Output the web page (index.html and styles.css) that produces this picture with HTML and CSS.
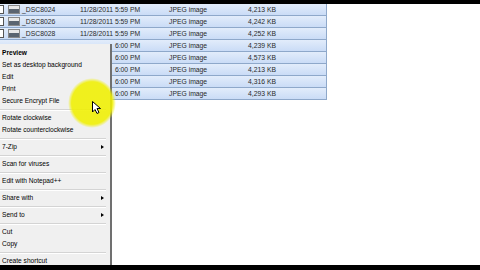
FILE: index.html
```html
<!DOCTYPE html>
<html>
<head>
<meta charset="utf-8">
<link rel="stylesheet" href="styles.css">
</head>
<body>
<div class="screen">
  <div class="bar"></div>
  <div class="main">
    <div class="files">
      <div class="row"><span class="ico"><i class="chk"></i><i class="pic"></i></span><span class="name">_DSC8024</span><span class="date">11/28/2011 5:59 PM</span><span class="type">JPEG image</span><span class="size">4,213 KB</span></div>
      <div class="row"><span class="ico"><i class="chk"></i><i class="pic"></i></span><span class="name">_DSC8026</span><span class="date">11/28/2011 5:59 PM</span><span class="type">JPEG image</span><span class="size">4,242 KB</span></div>
      <div class="row"><span class="ico"><i class="chk"></i><i class="pic"></i></span><span class="name">_DSC8028</span><span class="date">11/28/2011 5:59 PM</span><span class="type">JPEG image</span><span class="size">4,252 KB</span></div>
      <!-- rows under the menu: only the right part shows -->
      <div class="row"><span class="ico"></span><span class="name"></span><span class="date"><span class="hid">11/28/2011 </span>6:00 PM</span><span class="type">JPEG image</span><span class="size">4,239 KB</span></div>
      <div class="row"><span class="ico"></span><span class="name"></span><span class="date"><span class="hid">11/28/2011 </span>6:00 PM</span><span class="type">JPEG image</span><span class="size">4,573 KB</span></div>
      <div class="row"><span class="ico"></span><span class="name"></span><span class="date"><span class="hid">11/28/2011 </span>6:00 PM</span><span class="type">JPEG image</span><span class="size">4,213 KB</span></div>
      <div class="row"><span class="ico"></span><span class="name"></span><span class="date"><span class="hid">11/28/2011 </span>6:00 PM</span><span class="type">JPEG image</span><span class="size">4,316 KB</span></div>
      <div class="row"><span class="ico"></span><span class="name"></span><span class="date"><span class="hid">11/28/2011 </span>6:00 PM</span><span class="type">JPEG image</span><span class="size">4,293 KB</span></div>
    </div>
  </div>
  <div class="bar bottom"></div>

  <div class="menu">
    <div class="item bold">Preview</div>
    <div class="item">Set as desktop background</div>
    <div class="item">Edit</div>
    <div class="item">Print</div>
    <div class="item">Secure Encrypt File</div>
    <div class="sep"></div>
    <div class="item">Rotate clockwise</div>
    <div class="item">Rotate counterclockwise</div>
    <div class="sep"></div>
    <div class="item sub">7-Zip</div>
    <div class="sep"></div>
    <div class="item">Scan for viruses</div>
    <div class="sep"></div>
    <div class="item">Edit with Notepad++</div>
    <div class="sep"></div>
    <div class="item sub">Share with</div>
    <div class="sep"></div>
    <div class="item sub">Send to</div>
    <div class="sep"></div>
    <div class="item">Cut</div>
    <div class="item">Copy</div>
    <div class="sep"></div>
    <div class="item">Create shortcut</div>
  </div>

  <div class="spot"></div>
  <svg class="cursor" width="12" height="14" viewBox="0 0 12 14">
    <polygon points="0.5,0.5 0.5,11 3,8.5 5,12.5 7,11.5 5,7.5 8.5,7.5" fill="#fff" stroke="#000" stroke-width="1"/>
  </svg>
</div>
</body>
</html>
```

FILE: styles.css
```css
html, body {margin: 0; padding: 0; background: #fff;}
.screen {position: relative; width: 480px; height: 270px; overflow: hidden; display: flex; flex-direction: column; font-family: "Liberation Sans", Arial, sans-serif;}
.bar {height: 4px; background: #000; flex: none;}
.bar.bottom {height: 5px; position: relative; z-index: 5;}
.main {flex: 1; background: #fff;}

.files {width: 327px;}
.row {display: flex; align-items: center; height: 12px; box-sizing: border-box; border-bottom: 1px solid #8ea8ca; border-right: 1px solid #8ea8ca; background: linear-gradient(#e2ecfb, #cadcf6); font-size: 6.8px; color: #2a2a2a; white-space: nowrap;}
.ico {width: 22px; display: flex; align-items: center; gap: 2px; flex: none;}
.chk {display: block; width: 3px; height: 7px; border: 1px solid #555; border-left: none; background: #fff;}
.pic {display: block; width: 10px; height: 7px; border: 1px solid #8a8a8a; background: linear-gradient(#e8e8e8 0 40%, #5a6470 40%); margin-left: 2px;}
.name {width: 58px; flex: none;}
.date {width: 89px; flex: none;}
.hid {visibility: hidden;}
.type {width: 60px; flex: none;}
.size {width: 47px; flex: none; text-align: right;}

.menu {position: absolute; left: 0; top: 44px; width: 112px; height: 222px; box-sizing: border-box; padding-top: 3px; background: #f0f0f0; border-right: 2px solid #707070; z-index: 3; font-size: 6.6px; color: #000;}
.item {position: relative; height: 12px; line-height: 12px; padding-left: 2px; white-space: nowrap;}
.item.bold {font-weight: bold;}
.item.sub::after {content: ""; position: absolute; right: 6px; top: 4px; border-left: 3px solid #000; border-top: 2.5px solid transparent; border-bottom: 2.5px solid transparent;}
.sep {height: 5px; margin-right: 4px; background: linear-gradient(transparent 2px, #d4d4d4 2px, #d4d4d4 3px, #fff 3px, #fff 4px, transparent 4px);}

.spot {position: absolute; left: 68px; top: 78px; width: 48px; height: 50px; border-radius: 50%; background: radial-gradient(closest-side, rgba(240, 240, 0, 0.88) 85%, rgba(240, 240, 0, 0) 100%); z-index: 4;}
.cursor {position: absolute; left: 92px; top: 101px; z-index: 6;}
```
